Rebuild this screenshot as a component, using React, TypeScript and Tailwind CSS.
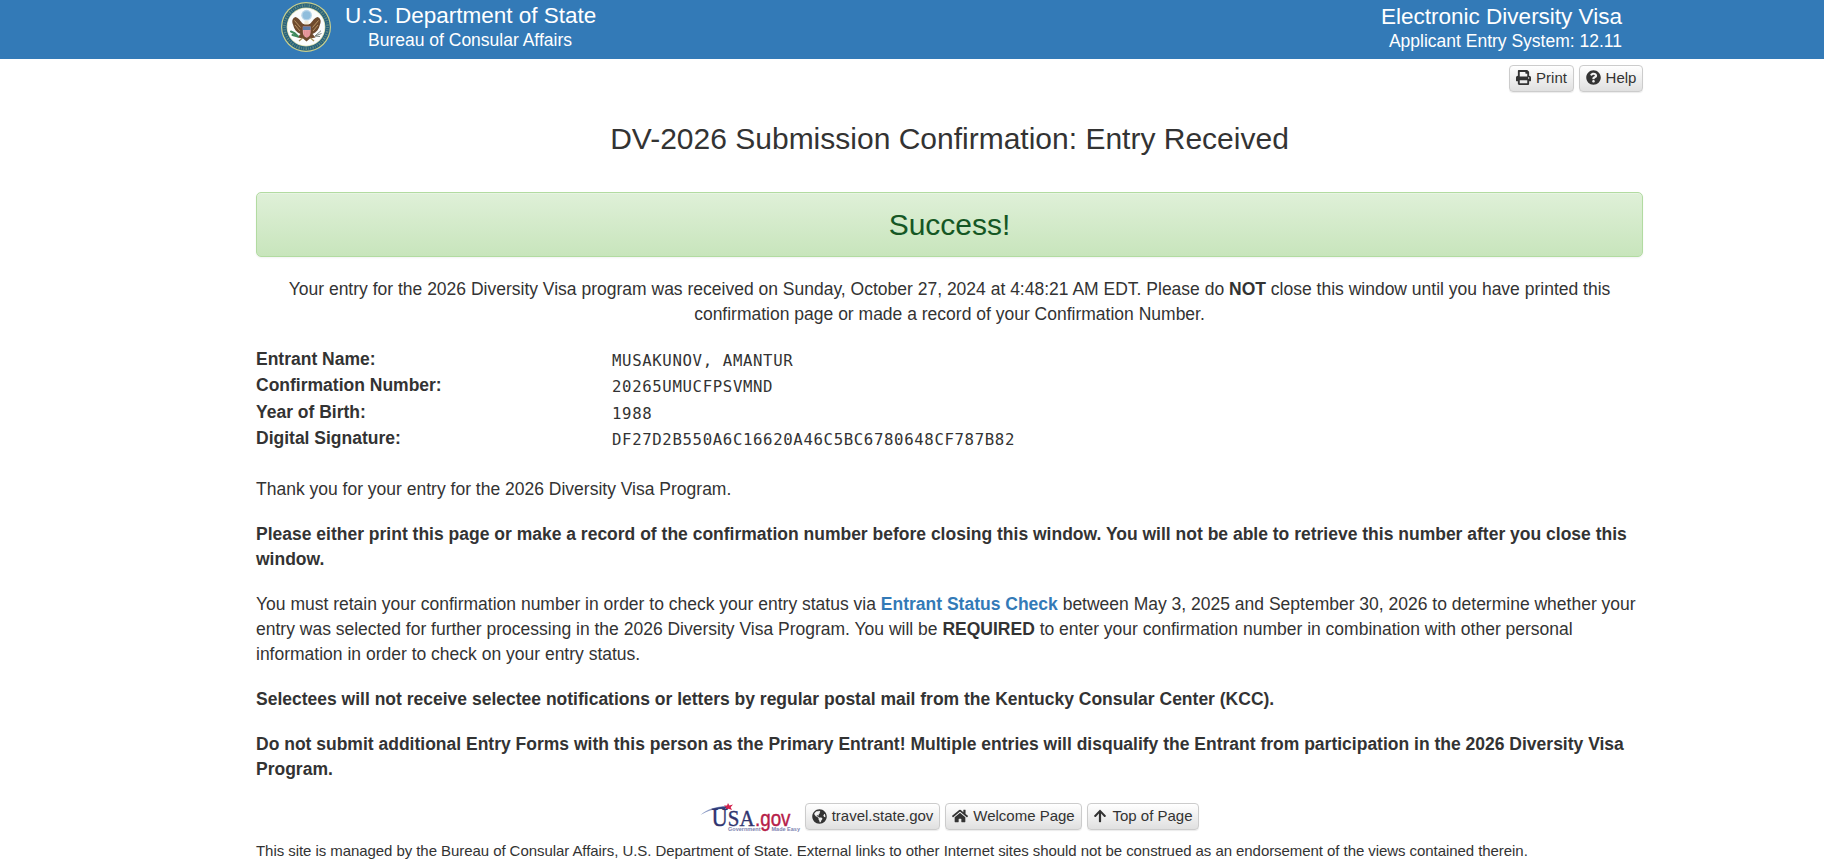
import type { ReactNode } from "react";
import { FaPrint, FaQuestionCircle, FaGlobeAmericas, FaHome, FaArrowUp } from "react-icons/fa";

function ToolButton({ icon, children, className }: { icon: ReactNode; children: ReactNode; className: string }) {
  return (
    <button
      className={`flex h-[27px] items-center justify-center gap-[5px] whitespace-nowrap rounded-[4px] border border-[#ccc] bg-gradient-to-b from-white to-[#e0e0e0] text-[15px] leading-[22px] text-[#333] shadow-[0_1px_1px_rgba(0,0,0,0.08)] ${className}`}
    >
      {icon}
      <span>{children}</span>
    </button>
  );
}

function Seal() {
  return (
    <svg width="50" height="50" viewBox="0 0 50 50" className="block">
      <circle cx="25" cy="25" r="25" fill="#c9cf8d" />
      <circle cx="25" cy="25" r="23.8" fill="#26617c" />
      <circle cx="25" cy="25" r="21.6" fill="none" stroke="#8fab8c" strokeWidth="2.6" strokeDasharray="1 1.5 0.7 1.2 1.4 1.3" opacity="0.55" />
      <circle cx="25" cy="25" r="19.4" fill="#d6d9a4" />
      <circle cx="25" cy="25" r="18.7" fill="#fbfcfc" />
      <circle cx="25.6" cy="13.2" r="5.4" fill="#b9d5e8" />
      <circle cx="25.6" cy="13.2" r="4" fill="#8fbddc" />
      <path d="M22.5 22C20 21 19.5 17 14.5 15C11.5 16 10.5 19 12 22.5C13 27 15.5 30.5 19.5 32L16.5 35.5L22 36.5L25.5 39.5L29 36.5L34.5 35.5L31.5 32C35.5 30.5 38 27 39 22.5C40.5 19 39.5 16 36.5 15C31.5 17 31 21 28.5 22Z" fill="#6e4a2e" />
      <path d="M13.5 18.5L19.5 25.5M14 23L19 29M37.5 18.5L31.5 25.5M37 23L32 29" stroke="#b99566" strokeWidth="1" />
      <path d="M23.2 22.5L23.4 19.5Q25.5 17.3 27.6 19.5L27.8 22.5Z" fill="#f1ead9" />
      <path d="M21.8 24.5H29.6V30C29.6 33.5 27.6 35 25.7 35.8C23.7 35 21.8 33.5 21.8 30Z" fill="#eba4a8" />
      <path d="M21.8 24.5H29.6V28H21.8Z" fill="#5c7ba6" />
      <path d="M23.8 28.3V34M26 28.3V35.4M28.1 28.3V34" stroke="#d87a80" strokeWidth="0.7" />
      <path d="M10 29.5Q13.5 30.5 17 34.5M11.5 33L17 34.5" stroke="#3f8a5c" strokeWidth="2.1" strokeLinecap="round" fill="none" />
      <path d="M34 34L40 28.7M34 34L40.5 31.5M34 34L39 34.5" stroke="#77837d" strokeWidth="1" />
      <path d="M21.5 36L18 39M29.5 36L33 39" stroke="#a99359" strokeWidth="1.3" />
    </svg>
  );
}

function UsaGovLogo() {
  return (
    <svg width="101" height="30" viewBox="0 0 101 30" className="block">
      <path d="M0.5 12C8 5.5 17 3 28 3.3L27.5 5C17 5 8 7.5 0.5 12Z" fill="#8b9bc4" />
      <path d="M11 6.2C17 4.2 23 3.4 28 3.6L25 6Z" fill="#35427f" />
      <path d="M28 0L29.4 2.4L33 1.6L30.7 4.3L32 7L28.5 5.7L25.5 7.4L26.2 4.4L23.9 2.6L27 2.5Z" fill="#d3224c" />
      <text x="11.5" y="23" textLength="43" lengthAdjust="spacingAndGlyphs" fill="#30346f" stroke="#30346f" strokeWidth="0.4" fontFamily="Liberation Serif, serif">
        <tspan fontSize="26">U</tspan>
        <tspan fontSize="24">SA</tspan>
      </text>
      <text x="55" y="23" fontSize="22" textLength="35.5" lengthAdjust="spacingAndGlyphs" fill="#b62049" stroke="#b62049" strokeWidth="0.4" fontFamily="Liberation Sans, sans-serif">.gov</text>
      <text x="28" y="28.3" fontSize="5" textLength="32.5" lengthAdjust="spacingAndGlyphs" fill="#7d83b0" fontFamily="Liberation Sans, sans-serif" fontWeight="700">Government</text>
      <text x="71.5" y="28.3" fontSize="5" textLength="28.5" lengthAdjust="spacingAndGlyphs" fill="#7d83b0" fontFamily="Liberation Sans, sans-serif" fontWeight="700">Made Easy</text>
    </svg>
  );
}

const details = [
  ["Entrant Name:", "MUSAKUNOV, AMANTUR"],
  ["Confirmation Number:", "20265UMUCFPSVMND"],
  ["Year of Birth:", "1988"],
  ["Digital Signature:", "DF27D2B550A6C16620A46C5BC6780648CF787B82"],
];

export default function App() {
  return (
    <div className="h-[863px] w-full overflow-hidden bg-white font-['Liberation_Sans',Arial,sans-serif] text-[17.5px] leading-[25px] text-[#333]">
      <header className="h-[59px] bg-[#337ab7] text-white">
        <div className="ml-[281px] flex w-[1341px] justify-between">
          <div className="flex">
            <div className="pt-[2px]"><Seal /></div>
            <div className="ml-[14px] whitespace-nowrap pt-[3px]">
              <div className="text-[22.5px] leading-[25px]">U.S. Department of State</div>
              <div className="ml-[23px] leading-[24px]">Bureau of Consular Affairs</div>
            </div>
          </div>
          <div className="whitespace-nowrap pt-[4px] text-right">
            <div className="text-[22.5px] leading-[25px]">Electronic Diversity Visa</div>
            <div className="leading-[24px]">Applicant Entry System: 12.11</div>
          </div>
        </div>
      </header>

      <main className="ml-[256px] w-[1387px]">
        <div className="flex justify-end gap-[5px] pt-[6px]">
          <ToolButton className="w-[65px] pb-[2px]" icon={<FaPrint size={15} />}>Print</ToolButton>
          <ToolButton className="w-[64px] pb-[2px]" icon={<FaQuestionCircle size={15} />}>Help</ToolButton>
        </div>

        <h1 className="mt-[30px] text-center text-[30px] leading-[34px]">DV-2026 Submission Confirmation: Entry Received</h1>

        <div className="mt-[36px] flex h-[65px] items-center justify-center rounded-[5px] border border-[#b2dba1] bg-gradient-to-b from-[#dff0d8] to-[#c8e5bc] text-[30px] text-[#155724] shadow-[inset_0_1px_0_rgba(255,255,255,0.25),0_1px_2px_rgba(0,0,0,0.05)]">
          Success!
        </div>

        <p className="mt-[20px] whitespace-nowrap text-center">
          Your entry for the 2026 Diversity Visa program was received on Sunday, October 27, 2024 at 4:48:21 AM EDT. Please do <b>NOT</b> close this window until you have printed this<br />
          confirmation page or made a record of your Confirmation Number.
        </p>

        <dl className="mt-[19px]">
          {details.map(([label, value]) => (
            <div key={label} className="flex h-[26.5px] items-center">
              <dt className="w-[356px] font-bold">{label}</dt>
              <dd className="pt-[2px] font-['DejaVu_Sans_Mono',monospace] text-[15.7px] tracking-[0.63px]">{value}</dd>
            </div>
          ))}
        </dl>

        <div className="mt-[24.6px] flex flex-col gap-[20px] whitespace-nowrap">
          <p>Thank you for your entry for the 2026 Diversity Visa Program.</p>
          <p className="font-bold">
            Please either print this page or make a record of the confirmation number before closing this window. You will not be able to retrieve this number after you close this<br />
            window.
          </p>
          <p>
            You must retain your confirmation number in order to check your entry status via <a className="font-bold text-[#337ab7]">Entrant Status Check</a> between May 3, 2025 and September 30, 2026 to determine whether your<br />
            entry was selected for further processing in the 2026 Diversity Visa Program. You will be <b>REQUIRED</b> to enter your confirmation number in combination with other personal<br />
            information in order to check on your entry status.
          </p>
          <p className="font-bold">Selectees will not receive selectee notifications or letters by regular postal mail from the Kentucky Consular Center (KCC).</p>
          <p className="font-bold">
            Do not submit additional Entry Forms with this person as the Primary Entrant! Multiple entries will disqualify the Entrant from participation in the 2026 Diversity Visa<br />
            Program.
          </p>
        </div>

        <footer>
          <div className="mt-[21px] ml-[444px] flex">
            <UsaGovLogo />
            <div className="ml-[4px] flex gap-[5px]">
              <ToolButton className="w-[135px]" icon={<FaGlobeAmericas size={15} />}>travel.state.gov</ToolButton>
              <ToolButton className="w-[137px]" icon={<FaHome size={16} />}>Welcome Page</ToolButton>
              <ToolButton className="w-[112px]" icon={<FaArrowUp size={14} />}>Top of Page</ToolButton>
            </div>
          </div>
          <p className="mt-[7px] whitespace-nowrap text-[15px] leading-[22px] tracking-[-0.062px]">
            This site is managed by the Bureau of Consular Affairs, U.S. Department of State. External links to other Internet sites should not be construed as an endorsement of the views contained therein.
          </p>
        </footer>
      </main>
    </div>
  );
}
